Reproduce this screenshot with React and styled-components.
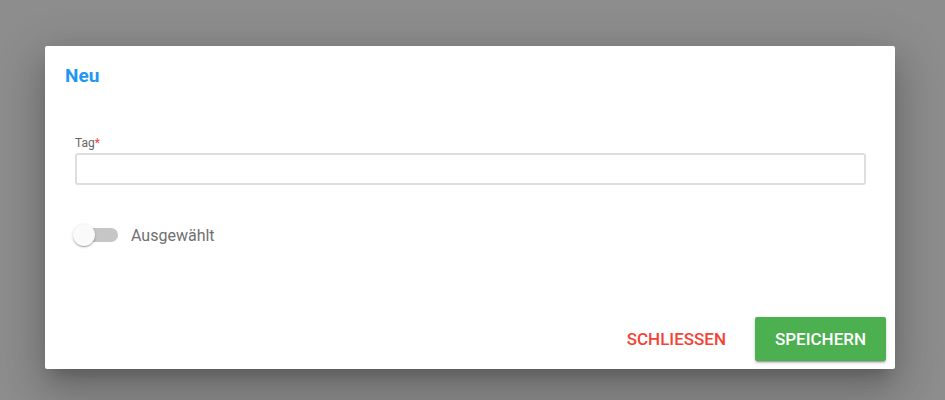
import React from "react";
import styled, { createGlobalStyle } from "styled-components";

const Global = createGlobalStyle`
  html, body { margin: 0; padding: 0; }
  body {
    background: #8d8d8d;
    font-family: Roboto, "Liberation Sans", Arial, sans-serif;
  }
`;

const Backdrop = styled.div`
  width: 945px;
  height: 400px;
  box-sizing: border-box;
  padding: 46px 0 0 45px;
  background: #8d8d8d;
  overflow: hidden;
`;

const Dialog = styled.div`
  width: 850px;
  height: 323px;
  background: #fff;
  border-radius: 2px;
  display: flex;
  flex-direction: column;
  box-shadow: 0 11px 15px -7px rgba(0, 0, 0, 0.2),
    0 24px 38px 3px rgba(0, 0, 0, 0.14), 0 9px 46px 8px rgba(0, 0, 0, 0.12);
`;

const Title = styled.h2`
  margin: 0;
  padding: 19px 20px 0;
  font-size: 19px;
  line-height: 22px;
  font-weight: 700;
  color: #2196f3;
`;

const Body = styled.div`
  padding: 49px 29px 0 30px;
  display: flex;
  flex-direction: column;
`;

const Field = styled.div`
  display: flex;
  flex-direction: column;
  gap: 3px;
`;

const Label = styled.label`
  font-size: 12px;
  line-height: 14px;
  color: #666;
`;

const Required = styled.span`
  color: #f44336;
`;

const Input = styled.input`
  box-sizing: border-box;
  width: 791px;
  height: 32px;
  border: 2px solid #dedede;
  border-radius: 3px;
  outline: none;
  padding: 0 8px;
  font: inherit;
  font-size: 14px;
`;

const SwitchRow = styled.div`
  display: flex;
  align-items: center;
  margin: 39px 0 0 -2px;
  gap: 13px;
`;

const Switch = styled.div`
  position: relative;
  width: 45px;
  height: 22px;
`;

const Track = styled.div`
  position: absolute;
  left: 11px;
  top: 4px;
  width: 34px;
  height: 14px;
  border-radius: 7px;
  background: #c6c6c6;
`;

const Thumb = styled.div`
  position: absolute;
  left: 0;
  top: 0;
  width: 22px;
  height: 22px;
  border-radius: 50%;
  background: #fafafa;
  box-shadow: 0 1px 3px rgba(0, 0, 0, 0.2), 0 1px 1px rgba(0, 0, 0, 0.14),
    0 2px 1px -1px rgba(0, 0, 0, 0.12);
`;

const SwitchLabel = styled.span`
  font-size: 16px;
  color: #707070;
`;

const Footer = styled.div`
  margin-top: auto;
  display: flex;
  justify-content: flex-end;
  align-items: center;
  gap: 13px;
  padding: 0 9px 8px 0;
`;

const Button = styled.button`
  height: 44px;
  border: none;
  border-radius: 2px;
  padding: 0 16px;
  font-family: inherit;
  font-size: 17px;
  font-weight: 500;
  text-transform: uppercase;
  cursor: pointer;
  color: ${(p) => (p.$raised ? "#fff" : "#f44336")};
  background: ${(p) => (p.$raised ? "#4caf50" : "transparent")};
  width: ${(p) => (p.$raised ? "131px" : "auto")};
  box-shadow: ${(p) =>
    p.$raised
      ? "0 3px 1px -2px rgba(0,0,0,.2), 0 2px 2px 0 rgba(0,0,0,.14), 0 1px 5px 0 rgba(0,0,0,.12)"
      : "none"};
`;

export default function App() {
  return (
    <>
      <Global />
      <Backdrop>
        <Dialog>
          <Title>Neu</Title>
          <Body>
            <Field>
              <Label>
                Tag<Required>*</Required>
              </Label>
              <Input type="text" />
            </Field>
            <SwitchRow>
              <Switch>
                <Track />
                <Thumb />
              </Switch>
              <SwitchLabel>Ausgewählt</SwitchLabel>
            </SwitchRow>
          </Body>
          <Footer>
            <Button>Schliessen</Button>
            <Button $raised>Speichern</Button>
          </Footer>
        </Dialog>
      </Backdrop>
    </>
  );
}
